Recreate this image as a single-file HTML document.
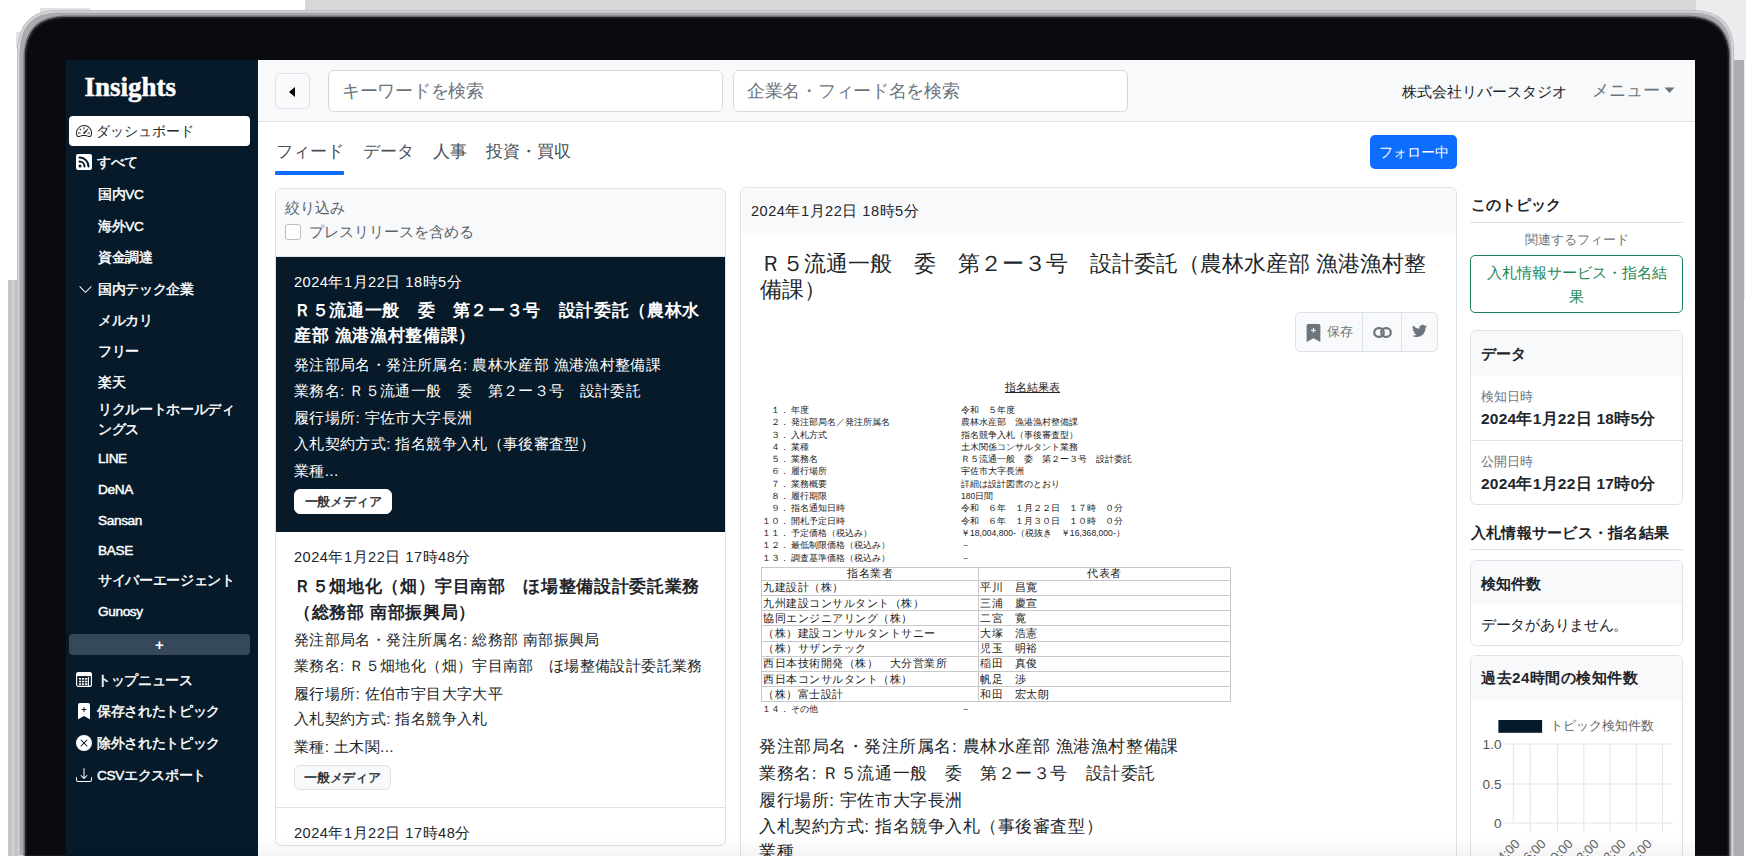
<!DOCTYPE html>
<html lang="ja">
<head>
<meta charset="utf-8">
<style>
*{box-sizing:border-box;margin:0;padding:0}
html,body{width:1757px;height:856px;overflow:hidden;background:#fff}
body{font-family:"Liberation Sans",sans-serif;color:#212529;position:relative}
.a{position:absolute;white-space:nowrap}
#frame{position:absolute;left:18px;top:10px;width:1716px;height:900px;border-radius:46px;background:#9c9ea3;
  box-shadow:inset 0 0 0 1px #c9cacd}
#bezel{position:absolute;left:25px;top:17px;width:1702px;height:900px;border-radius:40px;background:#0a0b10;
  box-shadow:inset 0 0 0 2px #2a2b30}
#screen{position:absolute;left:66px;top:60px;width:1629px;height:796px;background:#fff;overflow:hidden}
#side{position:absolute;left:0;top:0;width:192px;height:796px;background:#061a2a;color:#fff}
.sb{font-size:13.6px;letter-spacing:-.35px;line-height:18px;color:#fff;font-weight:normal;-webkit-text-stroke:.45px #fff}
.dk{color:#212529 !important;-webkit-text-stroke:0 !important}
.inp{background:#fff;border:1px solid #d6d9dc;border-radius:6px}
.ph{font-size:17.5px;letter-spacing:-.3px;line-height:22px;color:#6c757d}
.tab{font-size:17.1px;line-height:22px;color:#495057}
.fd{font-size:14.6px;line-height:18px;color:#212529;letter-spacing:.5px}
.ft{font-size:17px;letter-spacing:.65px;line-height:22px;font-weight:bold;color:#212529}
.fb{font-size:15.4px;letter-spacing:.36px;line-height:19px;color:#212529}
.w{color:#fff}
.badge{border:1px solid #dee2e6;border-radius:6px;background:#f8f9fa;font-size:13.2px;letter-spacing:-.2px;line-height:23px;text-align:center;font-weight:normal;-webkit-text-stroke:.4px #212529;color:#212529}
.dt{font-size:22.1px;line-height:26px;color:#212529}
.db{font-size:17.2px;letter-spacing:.55px;line-height:22px;color:#212529}
.rh{font-size:15.2px;line-height:20px;font-weight:bold;color:#212529}
.rl{font-size:13.1px;line-height:18px;color:#6c757d}
.rv{font-size:15.5px;letter-spacing:.25px;line-height:20px;font-weight:bold;color:#212529}
.cy{width:31.5px;text-align:right;font-size:13.6px;line-height:17px;color:#555}
.cx{font-size:13px;line-height:17px;color:#666;transform:rotate(-45deg);transform-origin:100% 30%}
#doc td{border:1px solid #c8c8c8;padding:0 1px;white-space:nowrap;height:15.2px;line-height:13.2px;font-size:11.2px;letter-spacing:.5px}
#hdr{position:absolute;left:192px;top:0;width:1437px;height:62px;background:#f8f9fa;border-bottom:1px solid #dee2e6}
</style>
</head>
<body>
<div class="a" style="left:305px;top:0;width:1391px;height:14px;background:#d7d7d9"></div>
<div class="a" style="left:1696px;top:0;width:50px;height:60px;background:#ececee"></div>
<div class="a" style="left:1734px;top:60px;width:11px;height:240px;background:#e9eaec"></div>
<div class="a" style="left:40px;top:8px;width:50px;height:6px;background:#e2e2e4"></div>
<div class="a" style="left:32px;top:16px;width:16px;height:8px;background:#e2e2e4"></div>
<div class="a" style="left:24px;top:24px;width:16px;height:8px;background:#e2e2e4"></div>
<div class="a" style="left:16px;top:32px;width:16px;height:16px;background:#e2e2e4"></div>
<svg class="a" style="left:0;top:0" width="1757" height="856" viewBox="0 0 1757 856">
  <rect x="8" y="280" width="10" height="576" fill="#c3c5c8"/>
  <rect x="12.5" y="280" width="1.5" height="576" fill="#d6d9dc"/>
  <rect x="1733" y="60" width="11" height="796" fill="#abadb0"/>
  <path d="M58,10 L1692,10 Q1734,10 1734,52 L1734,856 L17,856 L17,54 Q17,10 58,10 Z" fill="#a9abaf"/>
  <path d="M58,11.5 L1692,11.5 Q1732.5,11.5 1732.5,52 L1732.5,856 L18.5,856 L18.5,54 Q18.5,11.5 58,11.5 Z" fill="none" stroke="#d3d5d8" stroke-width="2"/>
  <path d="M66,17 L1687,17 Q1729,17 1729,59 L1729,856 L25,856 L25,59 Q25,17 66,17 Z" fill="none" stroke="#6a6c70" stroke-width="3"/>
  <path d="M66,17 L1687,17 Q1729,17 1729,59 L1729,856 L25,856 L25,59 Q25,17 66,17 Z" fill="#0a0b0f"/>
  <path d="M66,17.7 L1687,17.7 Q1728.3,17.7 1728.3,59 L1728.3,856 L25.7,856 L25.7,59 Q25.7,17.7 66,17.7 Z" fill="none" stroke="#222327" stroke-width="1.4"/>
</svg>
<div id="screen">
  <div id="side"></div>
  
</div>

<div id="sidebar">
<div class="a" style="left:84.5px;top:71px;font-family:'Liberation Serif',serif;font-weight:bold;font-size:27px;line-height:32px;color:#fff;-webkit-text-stroke:.5px #fff">Insights</div>
<div class="a" style="left:69px;top:116px;width:181px;height:30px;background:#fff;border-radius:4px"></div>
<svg class="a" style="left:76px;top:123px" width="16" height="16" viewBox="0 0 16 16" fill="#212529"><path d="M8 4a.5.5 0 0 1 .5.5V6a.5.5 0 0 1-1 0V4.5A.5.5 0 0 1 8 4zM3.732 5.732a.5.5 0 0 1 .707 0l.915.914a.5.5 0 1 1-.708.708l-.914-.915a.5.5 0 0 1 0-.707zM2 10a.5.5 0 0 1 .5-.5h1.586a.5.5 0 0 1 0 1H2.5A.5.5 0 0 1 2 10zm9.5 0a.5.5 0 0 1 .5-.5h1.5a.5.5 0 0 1 0 1H12a.5.5 0 0 1-.5-.5zm.754-4.246a.389.389 0 0 0-.527-.02L7.547 9.31a.91.91 0 1 0 1.302 1.258l3.434-4.297a.389.389 0 0 0-.029-.518z"/><path fill-rule="evenodd" d="M0 10a8 8 0 1 1 15.547 2.661c-.442 1.253-1.845 1.602-2.932 1.25C11.309 13.488 9.475 13 8 13c-1.474 0-3.31.488-4.615.911-1.087.352-2.49.003-2.932-1.25A7.988 7.988 0 0 1 0 10zm8-7a7 7 0 0 0-6.603 9.329c.203.575.923.876 1.68.63C4.397 12.533 6.358 12 8 12s3.604.532 4.923.96c.757.245 1.477-.056 1.68-.631A7 7 0 0 0 8 3z"/></svg>
<div class="a sb dk" style="left:96px;top:123px;font-weight:normal;font-size:13.6px;letter-spacing:0">ダッシュボード</div>
<svg class="a" style="left:76px;top:154px" width="16" height="16" viewBox="0 0 16 16" fill="#fff"><path d="M2 0a2 2 0 0 0-2 2v12a2 2 0 0 0 2 2h12a2 2 0 0 0 2-2V2a2 2 0 0 0-2-2H2zm1.5 2.5c5.523 0 10 4.477 10 10a1 1 0 1 1-2 0 8 8 0 0 0-8-8 1 1 0 0 1 0-2zm0 4a6 6 0 0 1 6 6 1 1 0 1 1-2 0 4 4 0 0 0-4-4 1 1 0 0 1 0-2zm.5 7a1.5 1.5 0 1 1 0-3 1.5 1.5 0 0 1 0 3z"/></svg>
<div class="a sb" style="left:97px;top:154px">すべて</div>
<div class="a sb" style="left:98px;top:186px">国内VC</div>
<div class="a sb" style="left:98px;top:218px">海外VC</div>
<div class="a sb" style="left:98px;top:249px">資金調達</div>
<svg class="a" style="left:78px;top:282px" width="15" height="15" viewBox="0 0 16 16" fill="#fff"><path fill-rule="evenodd" d="M1.646 4.646a.5.5 0 0 1 .708 0L8 10.293l5.646-5.647a.5.5 0 0 1 .708.708l-6 6a.5.5 0 0 1-.708 0l-6-6a.5.5 0 0 1 0-.708z"/></svg>
<div class="a sb" style="left:98px;top:281px">国内テック企業</div>
<div class="a sb" style="left:98px;top:312px">メルカリ</div>
<div class="a sb" style="left:98px;top:343px">フリー</div>
<div class="a sb" style="left:98px;top:374px">楽天</div>
<div class="a sb" style="left:98px;top:401px">リクルートホールディ</div>
<div class="a sb" style="left:98px;top:421px">ングス</div>
<div class="a sb" style="left:98px;top:450px">LINE</div>
<div class="a sb" style="left:98px;top:481px">DeNA</div>
<div class="a sb" style="left:98px;top:512px">Sansan</div>
<div class="a sb" style="left:98px;top:542px">BASE</div>
<div class="a sb" style="left:98px;top:572px">サイバーエージェント</div>
<div class="a sb" style="left:98px;top:603px">Gunosy</div>
<div class="a" style="left:69px;top:634px;width:181px;height:21px;background:#36495a;border-radius:4px"></div>
<div class="a" style="left:69px;top:634px;width:181px;height:21px;line-height:21px;text-align:center;color:#fff;font-weight:bold;font-size:15px">+</div>
<svg class="a" style="left:76px;top:672px" width="16" height="15" viewBox="0 0 16 15"><rect x="0.6" y="0.6" width="14.8" height="13.8" rx="2" fill="none" stroke="#fff" stroke-width="1.2"/><rect x="0.6" y="0.6" width="14.8" height="3.5" fill="#fff"/><g fill="#fff"><rect x="3" y="6" width="2.2" height="1.6"/><rect x="6" y="6" width="2.2" height="1.6"/><rect x="9" y="6" width="2.2" height="1.6"/><rect x="3" y="8.7" width="2.2" height="1.6"/><rect x="6" y="8.7" width="2.2" height="1.6"/><rect x="9" y="8.7" width="2.2" height="1.6"/><rect x="3" y="11.3" width="2.2" height="1.6"/><rect x="6" y="11.3" width="2.2" height="1.6"/><rect x="9" y="11.3" width="2.2" height="1.6"/></g><rect x="11.8" y="5" width="1.2" height="9" fill="#fff"/></svg>
<div class="a sb" style="left:97px;top:672px">トップニュース</div>
<svg class="a" style="left:76px;top:703px" width="16" height="16" viewBox="0 0 16 16" fill="#fff"><path fill-rule="evenodd" d="M2 15.5V2a2 2 0 0 1 2-2h8a2 2 0 0 1 2 2v13.5a.5.5 0 0 1-.74.439L8 13.069l-5.26 2.87A.5.5 0 0 1 2 15.5zm6.5-11a.5.5 0 0 0-1 0V6H6a.5.5 0 0 0 0 1h1.5v1.5a.5.5 0 0 0 1 0V7H10a.5.5 0 0 0 0-1H8.5V4.5z"/></svg>
<div class="a sb" style="left:97px;top:703px">保存されたトピック</div>
<svg class="a" style="left:76px;top:735px" width="16" height="16" viewBox="0 0 16 16" fill="#fff"><path d="M16 8A8 8 0 1 1 0 8a8 8 0 0 1 16 0zM5.354 4.646a.5.5 0 1 0-.708.708L7.293 8l-2.647 2.646a.5.5 0 0 0 .708.708L8 8.707l2.646 2.647a.5.5 0 0 0 .708-.708L8.707 8l2.647-2.646a.5.5 0 0 0-.708-.708L8 7.293 5.354 4.646z"/></svg>
<div class="a sb" style="left:97px;top:735px">除外されたトピック</div>
<svg class="a" style="left:76px;top:767px" width="16" height="16" viewBox="0 0 16 16" fill="#fff"><path d="M.5 9.9a.5.5 0 0 1 .5.5v2.5a1 1 0 0 0 1 1h12a1 1 0 0 0 1-1v-2.5a.5.5 0 0 1 1 0v2.5a2 2 0 0 1-2 2H2a2 2 0 0 1-2-2v-2.5a.5.5 0 0 1 .5-.5z"/><path d="M7.646 11.854a.5.5 0 0 0 .708 0l3-3a.5.5 0 0 0-.708-.708L8.5 10.293V1.5a.5.5 0 0 0-1 0v8.793L5.354 8.146a.5.5 0 1 0-.708.708l3 3z"/></svg>
<div class="a sb" style="left:97px;top:767px">CSVエクスポート</div>
</div>

<div id="main">
<!-- header -->
<div class="a" style="left:258px;top:60px;width:1437px;height:62px;background:#f8f9fa;border-bottom:1px solid #dee2e6"></div>
<div class="a" style="left:275px;top:73px;width:35px;height:36px;border:1px solid #dee2e6;border-radius:5px;background:#f8f9fa"></div>
<svg class="a" style="left:286px;top:85px" width="12" height="14" viewBox="0 0 12 14"><path d="M9 2 L3 7 L9 12 Z" fill="#000"/></svg>
<div class="a inp" style="left:328px;top:70px;width:395px;height:42px"></div>
<div class="a ph" style="left:342px;top:80px">キーワードを検索</div>
<div class="a inp" style="left:733px;top:70px;width:395px;height:42px"></div>
<div class="a ph" style="left:747px;top:80px">企業名・フィード名を検索</div>
<div class="a" style="left:1402px;top:82px;font-size:15px;line-height:20px;color:#212529">株式会社リバースタジオ</div>
<div class="a" style="left:1592px;top:80px;font-size:16.7px;line-height:22px;color:#6c757d">メニュー</div>
<svg class="a" style="left:1664px;top:87px" width="11" height="7" viewBox="0 0 11 7"><path d="M0.5 0.5 L10.5 0.5 L5.5 6 Z" fill="#6c757d"/></svg>

<!-- tabs -->
<div class="a tab" style="left:276px;top:141px">フィード</div>
<div class="a tab" style="left:363px;top:141px">データ</div>
<div class="a tab" style="left:433px;top:141px">人事</div>
<div class="a tab" style="left:486px;top:141px">投資・買収</div>
<div class="a" style="left:275px;top:171px;width:69px;height:4px;background:#0d6efd;border-radius:1px"></div>
<div class="a" style="left:1370px;top:135px;width:87px;height:34px;background:#0d6efd;border-radius:5px;color:#fff;font-size:14px;line-height:34px;text-align:center">フォロー中</div>

<!-- feed list -->
<div class="a" style="left:275px;top:188px;width:451px;height:658px;border:1px solid #dee2e6;border-radius:6px;background:#fff;overflow:hidden">
  <div class="a" style="left:0;top:0;width:449px;height:68px;background:#f8f9fa;border-bottom:1px solid #dee2e6"></div>
  <div class="a" style="left:0;top:68px;width:449px;height:275px;background:#061a2a"></div>
  <div class="a" style="left:0;top:618px;width:449px;height:1px;background:#dee2e6"></div>
</div>
<div class="a" style="left:285px;top:199px;font-size:15.2px;line-height:18px;color:#5c636a">絞り込み</div>
<div class="a" style="left:285px;top:224px;width:16px;height:16px;border:1px solid #b9bec3;border-radius:3px;background:#fff"></div>
<div class="a" style="left:309px;top:223px;font-size:14.9px;line-height:18px;color:#5c636a">プレスリリースを含める</div>

<div class="a fd w" style="left:294px;top:273px">2024年1月22日 18時5分</div>
<div class="a ft w" style="left:294px;top:300px">Ｒ５流通一般　委　第２ー３号　設計委託（農林水</div>
<div class="a ft w" style="left:294px;top:325px">産部 漁港漁村整備課）</div>
<div class="a fb w" style="left:294px;top:355px">発注部局名・発注所属名: 農林水産部 漁港漁村整備課</div>
<div class="a fb w" style="left:294px;top:381px">業務名: Ｒ５流通一般　委　第２ー３号　設計委託</div>
<div class="a fb w" style="left:294px;top:408px">履行場所: 宇佐市大字長洲</div>
<div class="a fb w" style="left:294px;top:434px">入札契約方式: 指名競争入札（事後審査型）</div>
<div class="a fb w" style="left:294px;top:461px">業種...</div>
<div class="a badge" style="left:294px;top:489px;width:98px;height:25px;background:#fff;border-color:#fff">一般メディア</div>

<div class="a fd" style="left:294px;top:548px">2024年1月22日 17時48分</div>
<div class="a ft" style="left:294px;top:576px">Ｒ５畑地化（畑）宇目南部　ほ場整備設計委託業務</div>
<div class="a ft" style="left:294px;top:602px">（総務部 南部振興局）</div>
<div class="a fb" style="left:294px;top:630px">発注部局名・発注所属名: 総務部 南部振興局</div>
<div class="a fb" style="left:294px;top:656px">業務名: Ｒ５畑地化（畑）宇目南部　ほ場整備設計委託業務</div>
<div class="a fb" style="left:294px;top:684px">履行場所: 佐伯市宇目大字大平</div>
<div class="a fb" style="left:294px;top:709px">入札契約方式: 指名競争入札</div>
<div class="a fb" style="left:294px;top:737px">業種: 土木関...</div>
<div class="a badge" style="left:294px;top:765px;width:97px;height:25px">一般メディア</div>
<div class="a fd" style="left:294px;top:824px">2024年1月22日 17時48分</div>
</div>

<div id="detail">
<div class="a" style="left:740px;top:187px;width:717px;height:700px;border:1px solid #dee2e6;border-radius:6px;background:#fff;overflow:hidden">
  <div class="a" style="left:0;top:0;width:715px;height:45px;background:#f8f9fa"></div>
</div>
<div class="a fd" style="left:751px;top:202px">2024年1月22日 18時5分</div>
<div class="a dt" style="left:760px;top:251px">Ｒ５流通一般　委　第２ー３号　設計委託（農林水産部 漁港漁村整</div>
<div class="a dt" style="left:760px;top:277px">備課）</div>
<div class="a" style="left:1295px;top:312px;width:143px;height:40px;border:1px solid #dee2e6;border-radius:5px;background:#f8f9fa"></div>
<div class="a" style="left:1362px;top:312px;width:1px;height:40px;background:#dee2e6"></div>
<div class="a" style="left:1401px;top:312px;width:1px;height:40px;background:#dee2e6"></div>
<svg class="a" style="left:1306px;top:324px" width="15" height="18" viewBox="0 0 13 17"><path d="M0 1.5A1.5 1.5 0 0 1 1.5 0h10A1.5 1.5 0 0 1 13 1.5V17L6.5 13.5 0 17Z" fill="#6c757d"/><path d="M6.5 3.8v4.4M4.3 6h4.4" stroke="#fff" stroke-width="1.1"/></svg>
<div class="a" style="left:1327px;top:323px;font-size:13px;line-height:18px;color:#6c757d">保存</div>
<svg class="a" style="left:1373px;top:327px" width="19" height="11" viewBox="0 0 19 11"><rect x="1.2" y="1.2" width="9.6" height="8.6" rx="4.3" fill="none" stroke="#6c757d" stroke-width="2.2"/><rect x="8.2" y="1.2" width="9.6" height="8.6" rx="4.3" fill="none" stroke="#6c757d" stroke-width="2.2"/></svg>
<svg class="a" style="left:1411px;top:323px" width="17" height="15" viewBox="0 0 16 16"><path d="M5.026 15c6.038 0 9.341-5.003 9.341-9.334 0-.14 0-.282-.006-.422A6.685 6.685 0 0 0 16 3.542a6.658 6.658 0 0 1-1.889.518 3.301 3.301 0 0 0 1.447-1.817 6.533 6.533 0 0 1-2.087.793A3.286 3.286 0 0 0 7.875 6.03a9.325 9.325 0 0 1-6.767-3.429 3.289 3.289 0 0 0 1.018 4.382A3.323 3.323 0 0 1 .64 6.575v.045a3.288 3.288 0 0 0 2.632 3.218 3.203 3.203 0 0 1-.865.115 3.23 3.23 0 0 1-.614-.057 3.283 3.283 0 0 0 3.067 2.277A6.588 6.588 0 0 1 .78 13.58a6.32 6.32 0 0 1-.78-.045A9.344 9.344 0 0 0 5.026 15z" fill="#6c757d"/></svg>

<div id="doc" class="a" style="left:760px;top:378px;width:475px;height:340px;font-size:8.6px;color:#222;line-height:12.3px">
  <div class="a" style="left:245px;top:3px;font-size:11px;text-decoration:underline">指名結果表</div>
  <div class="a" style="left:0px;top:26px;width:29px;text-align:right;white-space:pre;line-height:12.3px">１．
２．
３．
４．
５．
６．
７．
８．
９．
１０．
１１．
１２．
１３．</div>
  <div class="a" style="left:31px;top:26px;white-space:pre;line-height:12.3px">年度
発注部局名／発注所属名
入札方式
業種
業務名
履行場所
業務概要
履行期限
指名通知日時
開札予定日時
予定価格（税込み）
最低制限価格（税込み）
調査基準価格（税込み）</div>
  <div class="a" style="left:201px;top:26px;white-space:pre;line-height:12.3px">令和　５年度
農林水産部　漁港漁村整備課
指名競争入札（事後審査型）
土木関係コンサルタント業務
Ｒ５流通一般　委　第２ー３号　設計委託
宇佐市大字長洲
詳細は設計図書のとおり
180日間
令和　６年　１月２２日　１７時　０分
令和　６年　１月３０日　１０時　０分
￥18,004,800-（税抜き　￥16,368,000-）
－
－</div>
  <table class="a" style="left:1px;top:189px;width:470px;border-collapse:collapse;font-size:11px;line-height:13.6px">
    <tr style="height:12.9px"><td style="text-align:center;width:217px;height:12.9px;line-height:11px">指名業者</td><td style="text-align:center;height:12.9px;line-height:11px">代表者</td></tr>
    <tr><td>九建設計（株）</td><td>平川　昌寛</td></tr>
    <tr><td>九州建設コンサルタント（株）</td><td>三浦　慶宣</td></tr>
    <tr><td>協同エンジニアリング（株）</td><td>二宮　寛</td></tr>
    <tr><td>（株）建設コンサルタントサニー</td><td>大塚　浩憲</td></tr>
    <tr><td>（株）サザンテック</td><td>児玉　明裕</td></tr>
    <tr><td>西日本技術開発（株）　大分営業所</td><td>稲田　真俊</td></tr>
    <tr><td>西日本コンサルタント（株）</td><td>帆足　渉</td></tr>
    <tr><td>（株）富士設計</td><td>和田　宏太朗</td></tr>
  </table>
  <div class="a" style="left:0px;top:325px;width:29px;text-align:right">１４．</div>
  <div class="a" style="left:31px;top:325px">その他</div>
  <div class="a" style="left:201px;top:325px">－</div>
</div>

<div class="a db" style="left:759px;top:735px">発注部局名・発注所属名: 農林水産部 漁港漁村整備課</div>
<div class="a db" style="left:759px;top:762px">業務名: Ｒ５流通一般　委　第２ー３号　設計委託</div>
<div class="a db" style="left:759px;top:789px">履行場所: 宇佐市大字長洲</div>
<div class="a db" style="left:759px;top:815px">入札契約方式: 指名競争入札（事後審査型）</div>
<div class="a db" style="left:759px;top:840px">業種</div>
</div>

<div id="right">
<div class="a rh" style="left:1471px;top:195px">このトピック</div>
<div class="a" style="left:1470px;top:222px;width:213px;height:1px;background:#dee2e6"></div>
<div class="a" style="left:1470px;top:231px;width:213px;text-align:center;font-size:13.2px;line-height:18px;color:#6c757d">関連するフィード</div>
<div class="a" style="left:1470px;top:255px;width:213px;height:58px;border:1px solid #198754;border-radius:5px"></div>
<div class="a" style="left:1470px;top:261px;width:213px;text-align:center;font-size:15.3px;line-height:24px;color:#198754;white-space:normal">入札情報サービス・指名結<br>果</div>

<div class="a" style="left:1470px;top:330px;width:213px;height:175px;border:1px solid #dee2e6;border-radius:6px;overflow:hidden">
  <div class="a" style="left:0;top:0;width:211px;height:45px;background:#f8f9fa"></div>
  <div class="a" style="left:0;top:109px;width:211px;height:1px;background:#dee2e6"></div>
</div>
<div class="a rh" style="left:1481px;top:344px">データ</div>
<div class="a rl" style="left:1481px;top:388px">検知日時</div>
<div class="a rv" style="left:1481px;top:409px">2024年1月22日 18時5分</div>
<div class="a rl" style="left:1481px;top:453px">公開日時</div>
<div class="a rv" style="left:1481px;top:474px">2024年1月22日 17時0分</div>

<div class="a rh" style="left:1471px;top:523px;letter-spacing:.23px">入札情報サービス・指名結果</div>
<div class="a" style="left:1470px;top:549px;width:213px;height:1px;background:#dee2e6"></div>

<div class="a" style="left:1470px;top:560px;width:213px;height:86px;border:1px solid #dee2e6;border-radius:6px;overflow:hidden">
  <div class="a" style="left:0;top:0;width:211px;height:44px;background:#f8f9fa"></div>
</div>
<div class="a rh" style="left:1481px;top:574px">検知件数</div>
<div class="a" style="left:1481px;top:615px;font-size:14.6px;line-height:20px;color:#212529;letter-spacing:-.3px">データがありません。</div>

<div class="a" style="left:1470px;top:655px;width:213px;height:250px;border:1px solid #dee2e6;border-radius:6px;overflow:hidden">
  <div class="a" style="left:0;top:0;width:211px;height:45px;background:#f8f9fa"></div>
</div>
<div class="a rh" style="left:1481px;top:668px;letter-spacing:.5px">過去24時間の検知件数</div>
<svg class="a" style="left:1470px;top:700px" width="213" height="156" viewBox="0 0 213 156">
  <rect x="28.4" y="20" width="43.7" height="12.8" fill="#061a2a"/>
  <g stroke="#e5e5e5" stroke-width="1">
    <line x1="35" y1="44" x2="202.4" y2="44"/><line x1="35" y1="84" x2="202.4" y2="84"/><line x1="35" y1="123" x2="202.4" y2="123"/>
    <line x1="43.3" y1="44" x2="43.3" y2="123"/>
    <line x1="60.2" y1="44" x2="60.2" y2="132"/><line x1="87.6" y1="44" x2="87.6" y2="132"/><line x1="113.8" y1="44" x2="113.8" y2="132"/>
    <line x1="139.9" y1="44" x2="139.9" y2="132"/><line x1="166.3" y1="44" x2="166.3" y2="132"/><line x1="192.4" y1="44" x2="192.4" y2="132"/>
  </g>
</svg>
<div class="a" style="left:1550px;top:717px;font-size:13px;line-height:18px;color:#666">トピック検知件数</div>
<div class="a cy" style="left:1470px;top:736px">1.0</div>
<div class="a cy" style="left:1470px;top:776px">0.5</div>
<div class="a cy" style="left:1470px;top:815px">0</div>
<div class="a cx" style="left:1481px;top:834px;width:34px;text-align:right">14:00</div>
<div class="a cx" style="left:1507px;top:834px;width:34px;text-align:right">16:00</div>
<div class="a cx" style="left:1534px;top:834px;width:34px;text-align:right">20:00</div>
<div class="a cx" style="left:1560px;top:834px;width:34px;text-align:right">23:00</div>
<div class="a cx" style="left:1587px;top:834px;width:34px;text-align:right">03:00</div>
<div class="a cx" style="left:1613px;top:834px;width:34px;text-align:right">07:00</div>
</div>
<div class="a" style="left:66px;top:836px;width:1629px;height:20px;background:linear-gradient(rgba(0,0,0,0),rgba(0,0,0,.045))"></div>
</body>
</html>
